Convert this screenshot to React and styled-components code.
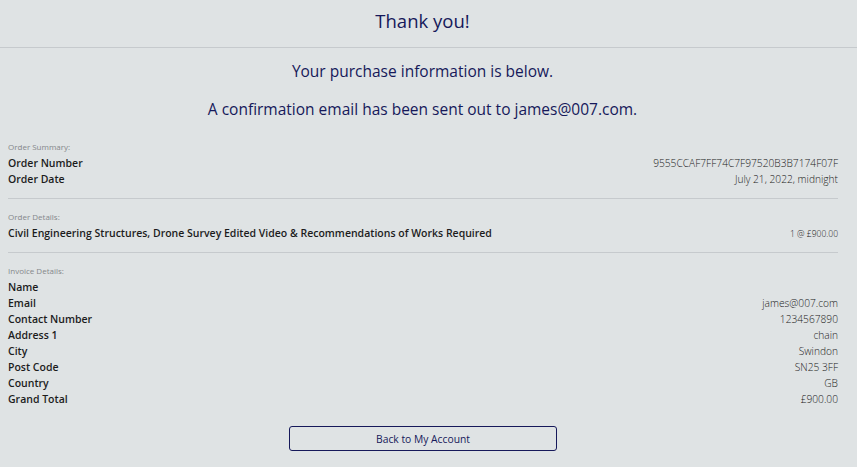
import React from "react";
import styled, { createGlobalStyle } from "styled-components";

const GlobalStyle = createGlobalStyle`
  html, body {
    margin: 0;
    padding: 0;
    background-color: #dfe3e4;
  }
  body {
    font-family: "Open Sans", "Noto Sans", sans-serif;
    color: #1f1f1f;
  }
`;

const Page = styled.div`
  width: 857px;
  min-height: 467px;
  box-sizing: border-box;
`;

const Header = styled.header`
  height: 48px;
  display: flex;
  justify-content: center;
  align-items: flex-start;
  padding: 9px 12px 0 0;
  border-bottom: 1px solid #c6cacd;
  box-sizing: border-box;
`;

const Title = styled.h1`
  margin: 0;
  font-size: 18.5px;
  line-height: 24px;
  font-weight: 500;
  color: #16195a;
`;

const Intro = styled.p`
  margin: 0;
  padding: ${(p) => p.$top}px 12px 0 0;
  text-align: center;
  color: #16195a;
  font-size: 15.5px;
  line-height: 20px;
`;

const Content = styled.main`
  padding: 20px 19px 0 8px;
`;

const Section = styled.section`
  padding: ${(p) => (p.$first ? "0" : "10px")} 0 ${(p) => (p.$first ? "11px" : "10px")};
  border-bottom: ${(p) => (p.$last ? "none" : "1px solid #c6cacd")};
`;

const Caption = styled.div`
  font-size: 8px;
  line-height: 16px;
  color: #85888b;
`;

const Row = styled.div`
  display: flex;
  justify-content: space-between;
  align-items: baseline;
  line-height: 16px;
`;

const Label = styled.span`
  font-size: 10.5px;
  font-weight: 600;
  color: #1c1c1c;
`;

const Value = styled.span`
  font-size: ${(p) => (p.$small ? "8.5px" : "10.2px")};
  font-weight: 300;
  color: #222;
`;

const Footer = styled.div`
  display: flex;
  justify-content: center;
  padding: 9px 0 16px;
`;

const BackButton = styled.button`
  width: 268px;
  height: 25px;
  background: transparent;
  border: 1px solid #16195a;
  border-radius: 3px;
  font-family: inherit;
  font-size: 10.3px;
  color: #16195a;
  cursor: pointer;
`;

const invoice = [
  ["Name", ""],
  ["Email", "james@007.com"],
  ["Contact Number", "1234567890"],
  ["Address 1", "chain"],
  ["City", "Swindon"],
  ["Post Code", "SN25 3FF"],
  ["Country", "GB"],
  ["Grand Total", "£900.00"],
];

export default function App() {
  return (
    <Page>
      <GlobalStyle />
      <Header>
        <Title>Thank you!</Title>
      </Header>
      <Intro $top={13}>Your purchase information is below.</Intro>
      <Intro $top={18}>
        A confirmation email has been sent out to james@007.com.
      </Intro>
      <Content>
        <Section $first>
          <Caption>Order Summary:</Caption>
          <Row>
            <Label>Order Number</Label>
            <Value>9555CCAF7FF74C7F97520B3B7174F07F</Value>
          </Row>
          <Row>
            <Label>Order Date</Label>
            <Value>July 21, 2022, midnight</Value>
          </Row>
        </Section>
        <Section>
          <Caption>Order Details:</Caption>
          <Row>
            <Label>
              Civil Engineering Structures, Drone Survey Edited Video &amp;
              Recommendations of Works Required
            </Label>
            <Value $small>1 @ £900.00</Value>
          </Row>
        </Section>
        <Section $last>
          <Caption>Invoice Details:</Caption>
          {invoice.map(([label, value]) => (
            <Row key={label}>
              <Label>{label}</Label>
              <Value>{value}</Value>
            </Row>
          ))}
        </Section>
        <Footer>
          <BackButton>Back to My Account</BackButton>
        </Footer>
      </Content>
    </Page>
  );
}
